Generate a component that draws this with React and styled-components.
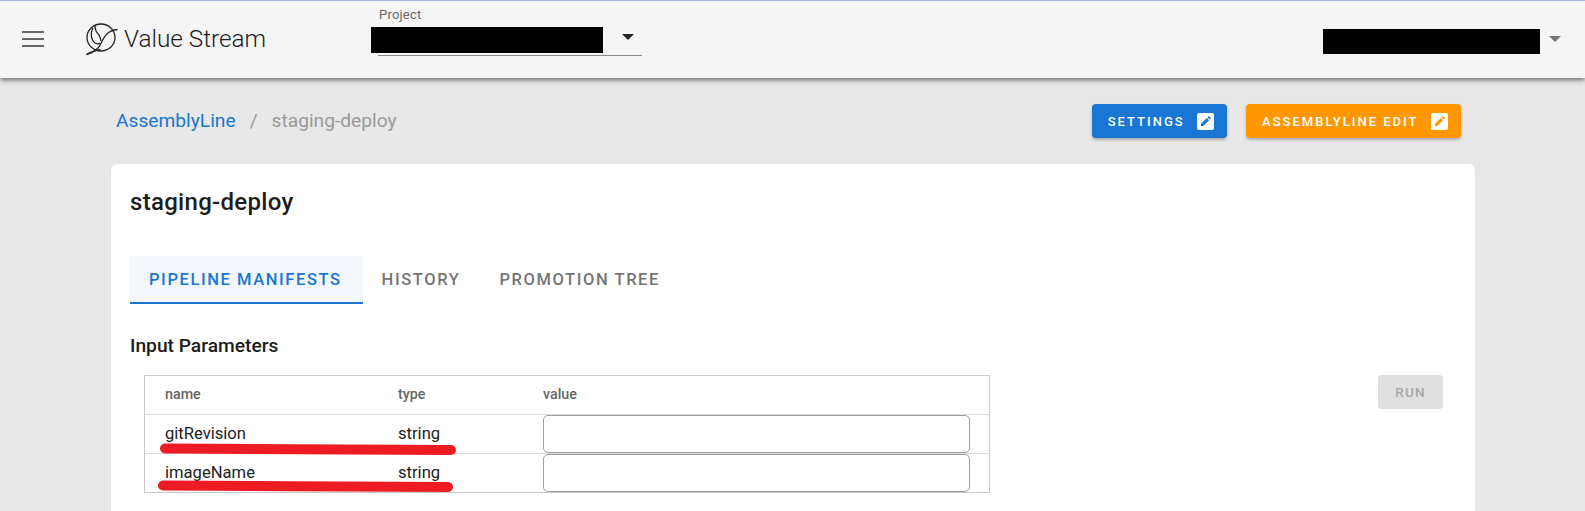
import * as React from 'react';
import styled, { createGlobalStyle } from 'styled-components';

const GlobalStyle = createGlobalStyle`
  html, body {
    margin: 0;
    padding: 0;
    height: 100%;
    overflow: hidden;
    background: #e8e8e8;
    font-family: Roboto, "Liberation Sans", sans-serif;
  }
`;

const Page = styled('div')`
  height: 511px;
  overflow: hidden;
  display: flex;
  flex-direction: column;
`;

const Header = styled('header')`
  position: relative;
  z-index: 2;
  height: 78px;
  flex: none;
  box-sizing: border-box;
  border-top: 1px solid #a9b8d6;
  background: #f5f5f5;
  box-shadow: 0 2px 5px rgba(0, 0, 0, 0.55);
  display: flex;
  align-items: flex-start;
`;

const MenuButton = styled('div')`
  width: 24px;
  margin: 30px 0 0 21px;
  display: flex;
  flex-direction: column;
  gap: 5px;
`;

const MenuBar = styled('span')`
  display: block;
  height: 2px;
  margin-left: 1px;
  width: 22px;
  background: #666;
`;

const Brand = styled('div')`
  margin: 21px 0 0 40px;
  width: 286px;
  display: flex;
  align-items: center;
  gap: 5px;
  font-size: 24.3px;
  font-weight: 300;
  color: #1c1c1c;
  height: 33px;
`;

const ProjectSelect = styled('div')`
  width: 271px;
  display: flex;
  flex-direction: column;
`;

const SelectLabel = styled('label')`
  font-size: 13px;
  line-height: 16px;
  margin: 6px 0 0 8px;
  color: #666;
  letter-spacing: 0.2px;
`;

const SelectBody = styled('div')`
  display: flex;
  align-items: flex-start;
  height: 26px;
  margin-top: 4px;
`;

const Redaction = styled('div')`
  background: #000;
  width: ${props => props.width}px;
  height: ${props => props.height}px;
  flex: none;
`;

const Caret = styled('span')`
  display: block;
  width: 0;
  height: 0;
  border-left: 6px solid transparent;
  border-right: 6px solid transparent;
  border-top: 6px solid ${props => props.color};
  margin: ${props => props.offset};
`;

const SelectLine = styled('div')`
  height: 1px;
  margin: 2px 0 0 7px;
  background: #8a8a8a;
`;

const UserMenu = styled('div')`
  margin: 28px 0 0 681px;
  display: flex;
  align-items: flex-start;
`;

const Main = styled('main')`
  flex: 1;
  padding: 26px 110px 0 111px;
  display: flex;
  flex-direction: column;
`;

const TopRow = styled('div')`
  display: flex;
  align-items: center;
  justify-content: space-between;
  height: 34px;
  padding-right: 14px;
`;

const Breadcrumbs = styled('nav')`
  display: flex;
  align-items: center;
  font-size: 19.2px;
  padding-left: 5px;
  padding-bottom: 1px;
  color: #999;
`;

const CrumbLink = styled('a')`
  color: #1976d2;
`;

const CrumbSeparator = styled('span')`
  margin: 0 14px;
  color: #999;
`;

const Actions = styled('div')`
  display: flex;
  gap: 19px;
`;

const ActionButton = styled('button')`
  height: 34px;
  box-sizing: border-box;
  padding: 0 13.5px 0 16px;
  border: 0;
  border-radius: 4px;
  background: ${props => props.color};
  color: #fff;
  font-family: inherit;
  font-size: 13px;
  font-weight: 500;
  letter-spacing: 2px;
  box-shadow: 0 2px 3px rgba(0, 0, 0, 0.25);
  display: flex;
  align-items: center;
  gap: 12px;
`;

const EditBox = styled('svg')`
  width: 17px;
  height: 17px;
  flex: none;
`;

const Card = styled('section')`
  margin-top: 26px;
  flex: 1;
  background: #fff;
  border-radius: 6px 6px 0 0;
  padding: 20px 32px 0 19px;
  box-shadow: 0 1px 2px rgba(0, 0, 0, 0.08);
`;

const Title = styled('h1')`
  margin: 0;
  font-size: 24px;
  line-height: 36px;
  font-weight: 500;
  letter-spacing: 0.3px;
  color: #1c1c1c;
`;

const Tabs = styled('div')`
  display: flex;
  margin-top: 36px;
`;

const Tab = styled('div')`
  height: 48px;
  box-sizing: border-box;
  padding: 0 21px 0 19px;
  margin-right: ${props => (props.active ? '0' : '-1px')};
  display: flex;
  align-items: center;
  font-size: 16.5px;
  font-weight: 500;
  letter-spacing: 1.59px;
  color: ${props => (props.active ? '#1976d2' : '#757575')};
  background: ${props => (props.active ? '#f3f7fb' : 'transparent')};
  border-bottom: 2px solid ${props => (props.active ? '#1976d2' : 'transparent')};
`;

const SectionTitle = styled('h2')`
  margin: 30px 0 0;
  font-size: 19.2px;
  line-height: 24px;
  font-weight: 500;
  color: #1c1c1c;
`;

const ParamsRow = styled('div')`
  margin-top: 17px;
  padding-left: 14px;
  display: flex;
  align-items: flex-start;
  justify-content: space-between;
`;

const TableWrap = styled('div')`
  position: relative;
  width: 846px;
  box-sizing: border-box;
  border: 1px solid #c8c8c8;
`;

const Row = styled('div')`
  height: ${props => (props.head ? '38px' : '39px')};
  box-sizing: border-box;
  padding-bottom: ${props => (props.head ? '2px' : '0')};
  display: grid;
  grid-template-columns: 253px 145px 427px;
  align-items: center;
  border-top: ${props => (props.head ? '0' : '1px solid #ddd')};
  color: ${props => (props.head ? '#666' : '#222')};
  font-size: ${props => (props.head ? '14.3px' : '16.6px')};
  font-weight: ${props => (props.head ? '500' : '400')};
`;

const Cell = styled('div')`
  padding-left: ${props => (props.first ? '20px' : '0')};
  padding-bottom: ${props => (props.flush ? '0' : '1px')};
`;

const ValueInput = styled('input')`
  display: block;
  width: 100%;
  height: 38px;
  box-sizing: border-box;
  border: 1px solid #9e9e9e;
  border-radius: 5px;
  background: #fff;
  outline: none;
`;

const Scribble = styled('svg')`
  position: absolute;
  left: -1px;
  top: -1px;
  width: 846px;
  height: 120px;
  pointer-events: none;
`;

const RunButton = styled('button')`
  width: 65px;
  height: 34px;
  border: 0;
  border-radius: 4px;
  background: #e0e0e0;
  color: #a6a6a6;
  font-family: inherit;
  font-size: 13.5px;
  font-weight: 500;
  letter-spacing: 1.2px;
`;

const params = [
  { name: 'gitRevision', type: 'string' },
  { name: 'imageName', type: 'string' }
];

const Logo = () => (
  <svg width="34" height="34" viewBox="0 0 34 34" fill="none" stroke="#2a2422" strokeWidth="1.3">
    <ellipse cx="16" cy="15.500" rx="14" ry="13.500" />
    <path d="M8 6C5 11 6 18 10 21c2 1 4 1 5 0" />
    <path d="M10 4c0 4 2 7 4 9 1 2 2 4 2 6" />
    <path d="M1.500 32.500c4-1 8-3 12-7 3-4 4-10 10-15 3-2 6-3 9-3" />
    <path d="M1.500 32.500c5-3 9-4 14-5" />
  </svg>
);

const EditIcon = ({ color }) => (
  <EditBox viewBox="0 0 17 17">
    <rect width="17" height="17" rx="2" fill="#fff" />
    <path d="M4 13v-2.300l5.800-5.800 2.300 2.300L6.300 13z M10.500 4.200l.8-.8c.3-.3.7-.3 1 0l1.300 1.300c.3.3.3.7 0 1l-.8.8z" fill={color} />
  </EditBox>
);

export default function App() {
  return (
    <Page>
      <GlobalStyle />
      <Header>
        <MenuButton>
          <MenuBar />
          <MenuBar />
          <MenuBar />
        </MenuButton>
        <Brand>
          <Logo />
          Value Stream
        </Brand>
        <ProjectSelect>
          <SelectLabel>Project</SelectLabel>
          <SelectBody>
            <Redaction width={232} height={26} />
            <Caret color="#222" offset="7px 0 0 19px" />
          </SelectBody>
          <SelectLine />
        </ProjectSelect>
        <UserMenu>
          <Redaction width={217} height={25} />
          <Caret color="#777" offset="7px 0 0 9px" />
        </UserMenu>
      </Header>
      <Main>
        <TopRow>
          <Breadcrumbs>
            <CrumbLink>AssemblyLine</CrumbLink>
            <CrumbSeparator>/</CrumbSeparator>
            staging-deploy
          </Breadcrumbs>
          <Actions>
            <ActionButton color="#1976d2">
              SETTINGS
              <EditIcon color="#1976d2" />
            </ActionButton>
            <ActionButton color="#ff9800">
              ASSEMBLYLINE EDIT
              <EditIcon color="#ff9800" />
            </ActionButton>
          </Actions>
        </TopRow>
        <Card>
          <Title>staging-deploy</Title>
          <Tabs>
            <Tab active>PIPELINE MANIFESTS</Tab>
            <Tab>HISTORY</Tab>
            <Tab>PROMOTION TREE</Tab>
          </Tabs>
          <SectionTitle>Input Parameters</SectionTitle>
          <ParamsRow>
            <TableWrap>
              <Row head>
                <Cell first>name</Cell>
                <Cell>type</Cell>
                <Cell>value</Cell>
              </Row>
              {params.map(param => (
                <Row key={param.name}>
                  <Cell first>{param.name}</Cell>
                  <Cell>{param.type}</Cell>
                  <Cell flush>
                    <ValueInput />
                  </Cell>
                </Row>
              ))}
              <Scribble viewBox="0 0 846 120" fill="none" stroke="#ed1c24" strokeWidth="10" strokeLinecap="round">
                <path d="M21 73.500c90 .5 200 1 286 1.500" />
                <path d="M19 110.500c90 .5 200 1 285 1.500" />
              </Scribble>
            </TableWrap>
            <RunButton disabled>RUN</RunButton>
          </ParamsRow>
        </Card>
      </Main>
    </Page>
  );
}
